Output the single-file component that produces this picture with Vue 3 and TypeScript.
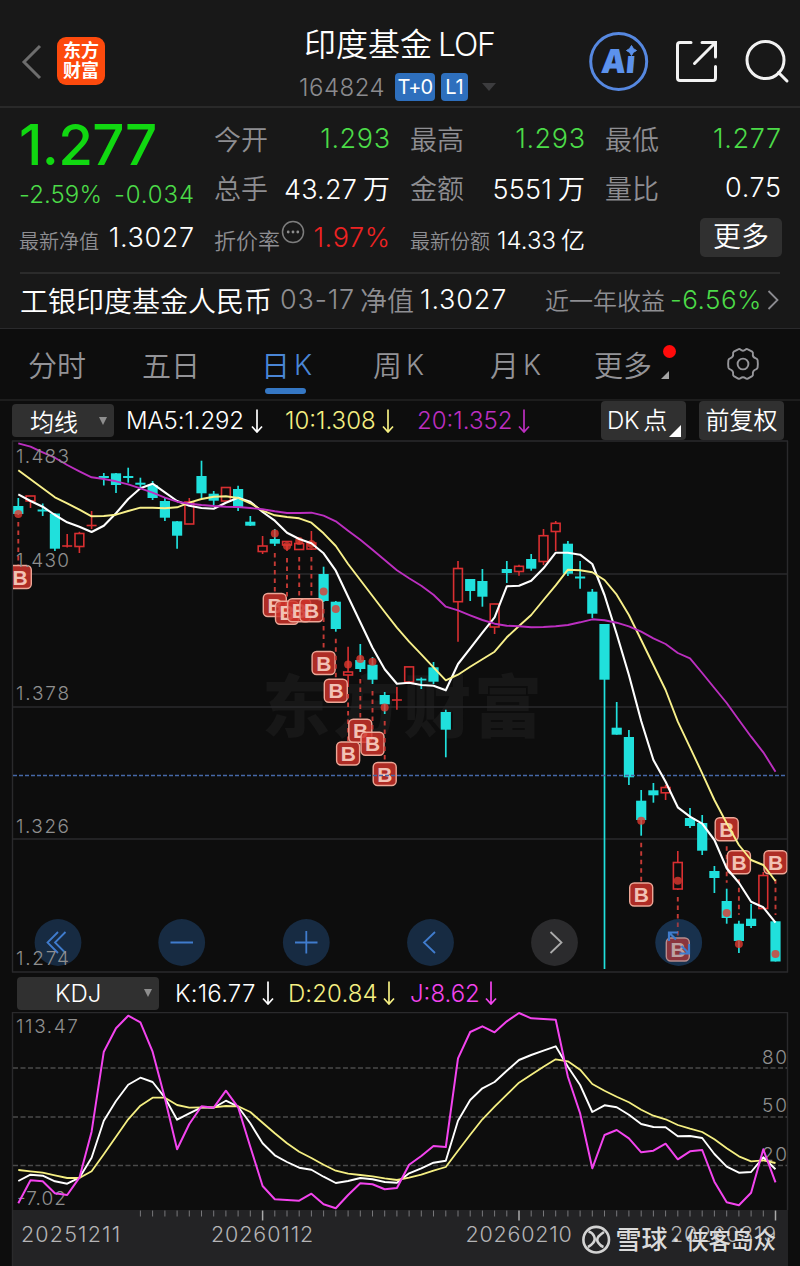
<script setup lang="ts">
type Candle = [up: 0 | 1, high: number, top: number, bottom: number, low: number]
interface Signal { i: number; dot: number; badge: number; dx?: number }
interface Line { points: string; color: string; width: number }

const STEP = 12.213
const xAt = (i: number): number => +(18.3 + STEP * i).toFixed(1)

const candles: Candle[] = [
  [0, 498, 506, 514, 515], [1, 496, 496, 501, 508], [0, 503.5, 509.5, 511.5, 516], [0, 513, 513.5, 548.7, 551],
  [1, 534, 546, 546, 547.5], [1, 531.7, 533.5, 546.5, 553], [1, 511, 525.5, 525.5, 529], [0, 473, 476, 478, 485.5],
  [0, 473, 473.3, 485, 493], [0, 467.7, 476, 478, 482.7], [0, 477.7, 482.7, 484.7, 487.7], [0, 481, 485, 498, 500],
  [0, 498, 501, 517.7, 521], [0, 521, 521.3, 535.7, 548.7], [1, 498, 502, 524, 524], [0, 460.7, 476, 493.3, 498],
  [0, 491, 493.7, 500.7, 505], [1, 487.3, 487.5, 501, 501], [0, 485.7, 489, 507.7, 511], [0, 516, 521.7, 525.7, 526],
  [1, 536, 546, 551.5, 554], [0, 529, 539, 543.7, 546], [1, 541, 541.5, 545, 551], [1, 538, 543.5, 549.5, 550],
  [1, 531, 543, 549, 550], [0, 566.7, 574, 601, 602], [0, 601, 601.7, 629, 631.7], [1, 646.7, 672, 675, 687],
  [0, 644, 660, 669, 672], [0, 657, 664.7, 679.7, 684], [0, 692, 695, 704.3, 714], [1, 687, 700, 700, 709.7],
  [1, 666.7, 666.9, 682, 682], [0, 677.5, 678.7, 680.5, 689], [0, 662, 667.3, 681.7, 684], [0, 709.7, 712, 729.7, 757.3],
  [1, 561, 568.5, 601.7, 641.7], [0, 579, 579, 591, 601], [0, 569, 581, 596.7, 606.7], [1, 603.7, 604, 627, 634],
  [0, 561, 569, 573, 583], [1, 564.7, 566.3, 571.5, 575.7], [0, 554, 559, 568.7, 570.7], [1, 529, 535.7, 561.5, 565],
  [1, 521, 523.3, 531.5, 551], [0, 541, 543.7, 573.7, 576], [0, 561, 576.5, 578.5, 588.7], [0, 589, 591.7, 613.7, 618],
  [0, 624, 624, 679.7, 969], [0, 702, 727.7, 734.7, 734.7], [0, 730, 737, 777.3, 785], [0, 790, 800.7, 820, 835.7],
  [0, 783, 790.3, 795.3, 802.7], [1, 785, 787.5, 792.8, 800], [1, 851, 862.5, 889, 890], [0, 808, 818, 826, 828],
  [0, 815, 823, 850.7, 855], [0, 866, 871, 878, 893], [0, 888.7, 901, 918, 923.7], [0, 920.7, 923.7, 941, 953],
  [0, 904, 918.7, 926, 928], [1, 872, 875.5, 908.5, 909], [0, 921, 921.3, 961.5, 961.5],
]

const signals: Signal[] = [
  { i: 0, dot: 514, badge: 577, dx: 1.5 }, { i: 21, dot: 533.5, badge: 605 }, { i: 22, dot: 546, badge: 612.7 },
  { i: 23, dot: 541, badge: 610.3 }, { i: 24, dot: 544, badge: 610.3 }, { i: 25, dot: 591.5, badge: 663 },
  { i: 26, dot: 609, badge: 690.8 }, { i: 27, dot: 664.5, badge: 753.5 }, { i: 28, dot: 659, badge: 730.8 },
  { i: 29, dot: 661.7, badge: 743.7 }, { i: 30, dot: 707.5, badge: 774 }, { i: 51, dot: 820.7, badge: 894.5 },
  { i: 54, dot: 880.7, badge: 949.5 }, { i: 58, dot: 913, badge: 829.3 }, { i: 59, dot: 944, badge: 862.3 },
  { i: 62, dot: 954, badge: 862.3 },
]

const stem = (s: Signal): [number, number] => {
  const c = candles[s.i]
  return s.badge > s.dot ? [c[4] + 7, s.badge - 12] : [s.badge + 17, c[1] - 6]
}

const ma5 = [494.3, 501, 506.7, 515, 522.3, 526.7, 532, 525.7, 513.3, 499, 488.3, 483.7, 492.3, 501, 505.7, 508, 508.7, 502.7, 497.7, 501.7, 512, 520.7, 532.7, 539, 543.3, 553.3, 570.7, 596.7, 622.3, 647.7, 669.3, 683.7, 682.7, 685, 685.7, 690.3, 664, 648.3, 632.7, 617.3, 586.3, 585.7, 580.7, 568.3, 552.7, 552.7, 554.7, 564, 595, 634, 675, 721, 760, 781.7, 807.3, 816.7, 823.7, 840, 868.3, 882.7, 901.7, 907.3, 922.7]
const ma10 = [470.3, 479.3, 488.3, 497.3, 503.3, 509.7, 516.3, 516, 514.7, 511, 507.7, 507.7, 508.3, 507.3, 502.7, 499, 496.7, 496.3, 498, 503.3, 510.7, 515.3, 517, 518.3, 522.7, 533.3, 546, 564, 580, 596, 612, 627.7, 641.7, 654.3, 667.3, 680.3, 674.7, 666.7, 659.3, 651.7, 637.3, 626, 615, 600, 585.3, 569.7, 570.3, 572.3, 580, 594.7, 615, 640, 665, 690, 721.7, 747.3, 773.3, 800, 823.3, 845, 860, 865, 881]
const ma20 = [443.3, 446.7, 452.3, 457.7, 465, 471.3, 477.3, 479, 481.3, 484.3, 488.3, 492.7, 497.7, 501.7, 503.7, 505, 506, 506.7, 507, 508, 509.3, 511.3, 513, 513, 512.7, 515.7, 521.3, 530.7, 539.7, 549.7, 560, 570.3, 578.3, 585.7, 594.7, 606.7, 610.3, 615.3, 620, 623.7, 625.7, 626.3, 627.3, 627, 626.3, 625, 622.3, 619.3, 620.3, 622.7, 626.3, 631.7, 638.3, 644, 653, 658.3, 673, 688, 703, 720, 736.7, 752.3, 771.7]

/* Oscillator samples, in thirds of a pixel below y = 1000. */
const k = [543, 524, 527, 544, 551, 533, 473, 362, 303, 254, 233, 246, 293, 359, 340, 322, 323, 302, 320, 370, 430, 466, 486, 503, 509, 530, 549, 543, 534, 538, 546, 548, 520, 505, 488, 482, 362, 300, 265, 246, 212, 180, 165, 152, 139, 200, 255, 336, 316, 322, 344, 372, 381, 382, 409, 408, 414, 462, 500, 518, 516, 472, 508]
const d = [510, 514, 518, 526, 534, 534, 514, 463, 410, 358, 317, 293, 293, 315, 323, 322, 322, 318, 319, 336, 368, 400, 430, 455, 474, 494, 512, 521, 525, 529, 535, 540, 533, 524, 512, 501, 452, 404, 358, 320, 284, 248, 224, 200, 178, 184, 209, 252, 272, 290, 307, 329, 347, 358, 375, 386, 396, 418, 445, 469, 484, 481, 489]
const j = [610, 541, 544, 580, 585, 533, 395, 155, 85, 47, 67, 155, 295, 448, 372, 319, 323, 272, 322, 440, 558, 598, 600, 602, 581, 613, 625, 585, 550, 553, 568, 564, 494, 468, 438, 441, 175, 96, 79, 97, 64, 39, 55, 57, 59, 230, 340, 505, 405, 390, 415, 457, 452, 431, 478, 454, 450, 545, 607, 616, 578, 448, 547]

const path = (ys: number[]): string => ys.map((y, i) => `${xAt(i)},${y.toFixed(1)}`).join(' ')
const fromThirds = (v: number[]): number[] => v.map((n) => 1000 + n / 3)

const averages: Line[] = [
  { points: path(ma5), color: '#ffffff', width: 2.1 },
  { points: path(ma10), color: '#f8f08a', width: 1.9 },
  { points: path(ma20), color: '#bc2fc0', width: 1.9 },
]
const oscillators: Line[] = [
  { points: path(fromThirds(k)), color: '#ffffff', width: 1.9 },
  { points: path(fromThirds(d)), color: '#f5ef82', width: 1.8 },
  { points: path(fromThirds(j)), color: '#f344ee', width: 2 },
]
const priceLabels = [
  { text: '1.483', y: 463 }, { text: '1.430', y: 567 }, { text: '1.378', y: 700 }, { text: '1.326', y: 832.5 }, { text: '1.274', y: 965 },
]
const ticks = Array.from({ length: 53 }, (_, n) => n + 10)
const major = new Set([20, 41, 62])
</script>

<template>
  <main class="app">
    <header class="top">
      <svg class="back" width="22" height="38" viewBox="0 0 22 38"><path d="M19 3 3 19l16 16" /></svg>
      <div class="logo"><span>东方</span><span>财富</span></div>
      <div class="title">
        <h1><span>印度基金</span><span class="lof">LOF</span></h1>
        <div class="sub">
          <span class="code">164824</span><b class="tag t0">T+0</b><b class="tag l1">L1</b><i class="caret"></i>
        </div>
      </div>
      <svg class="actions" width="216" height="64" viewBox="584 30 216 64">
        <circle cx="618.700" cy="61.500" r="28" class="ai-ring" />
        <g transform="translate(600.500 73) skewX(-5)"><text x="0" y="0" class="ai-text" textLength="34" lengthAdjust="spacingAndGlyphs">Ai</text></g>
        <path d="M624 44.500H638V56H624z" fill="#181818" />
        <path d="M631.500 45.500Q632.800 49.200 636.500 50.500 632.800 51.800 631.500 55.500 630.200 51.800 626.500 50.500 630.200 49.200 631.500 45.500z" fill="#5c92ec" stroke="#5c92ec" stroke-width="1" />
        <g class="line">
          <path d="M691 42.500H680q-2.500 0-2.500 2.500V78q0 2.500 2.500 2.500H713q2.500 0 2.500-2.500V66.500M702 42.500h13.500V57M715 43 694.500 63.500" />
          <circle cx="765.500" cy="60" r="18.500" /><path d="M778.500 72.500 787 81" />
        </g>
      </svg>
    </header>

    <section class="quote">
      <div class="price">1.277</div>
      <div class="pair"><span>今开</span><em class="g">1.293</em></div>
      <div class="pair"><span>最高</span><em class="g">1.293</em></div>
      <div class="pair"><span>最低</span><em class="g">1.277</em></div>
      <div class="pair change"><em class="g">-2.59%</em><em class="g delta">-0.034</em></div>
      <div class="pair"><span>总手</span><em class="wide">43.27<i>万</i></em></div>
      <div class="pair"><span>金额</span><em class="wide">5551<i>万</i></em></div>
      <div class="pair"><span>量比</span><em>0.75</em></div>
      <div class="pair"><span class="s20">最新净值</span><em class="nav">1.3027</em></div>
      <div class="pair rate"><span class="s22">折价率</span>
        <svg width="24" height="24" viewBox="0 0 24 24"><circle cx="12" cy="12" r="10.500" fill="none" stroke="#7d7d7d" stroke-width="1.500" /><g fill="#8d8d8d"><circle cx="7.200" cy="12" r="1.400" /><circle cx="12" cy="12" r="1.400" /><circle cx="16.800" cy="12" r="1.400" /></g></svg>
        <em class="r">1.97%</em></div>
      <div class="pair"><span class="s20">最新份额</span><em class="share">14.33<i>亿</i></em></div>
      <button class="more">更多</button>
    </section>

    <section class="fund">
      <span class="name">工银印度基金人民币</span><span class="date">03-17</span><span class="label">净值</span><span class="val">1.3027</span>
      <span class="year">近一年收益</span><span class="ret">-6.56%</span>
      <svg width="12" height="20" viewBox="0 0 12 20"><path d="M1.500 1 10.500 10 1.500 19" fill="none" stroke="#8b8b90" stroke-width="1.800" /></svg>
    </section>

    <nav class="tabs">
      <a>分时</a><a>五日</a><a class="on">日<b>K</b></a><a>周<b>K</b></a><a>月<b>K</b></a>
      <a class="rest">更多<i class="dot"></i><i class="corner"></i></a>
      <svg width="34" height="34" viewBox="0 0 34 34" fill="none" stroke="#96969a" stroke-width="1.900" stroke-linejoin="round">
        <path d="M12.200 2.300q1.200-.8 2.200.2 2.600 2.300 5.200 0 1-1 2.200-.2l4.400 2.400q1 .8.700 2-.6 3.600 3 4.700 1.500.5 1.700 1.800.5 3.800 0 7.300-.2 1.300-1.700 1.900-3.500 1.200-3 4.700.2 1.300-.7 2l-4.400 2.500q-1.200.6-2.200-.300-2.600-2.200-5.200 0-1 .9-2.200.3l-4.400-2.500q-1-.8-.700-2 .5-3.500-3-4.700-1.400-.5-1.700-1.900-.5-3.500 0-7.300.2-1.300 1.700-1.800 3.600-1.200 3-4.700-.3-1.200.7-2z" />
        <circle cx="17" cy="17" r="5.400" />
      </svg>
    </nav>

    <div class="bar ma">
      <button class="drop"><span>均线</span><i></i></button>
      <span class="c1">MA5:1.292</span><svg class="arr" viewBox="0 0 12 24"><path d="M6 .5V22.500M1 17.500l5 5.500 5-5.500" /></svg>
      <span class="c2 y">10:1.308</span><svg class="arr y" viewBox="0 0 12 24"><path d="M6 .5V22.500M1 17.500l5 5.500 5-5.500" /></svg>
      <span class="c3 p">20:1.352</span><svg class="arr p" viewBox="0 0 12 24"><path d="M6 .5V22.500M1 17.500l5 5.500 5-5.500" /></svg>
      <button class="chip dk">DK<span>点</span><i></i></button>
      <button class="chip">前复权</button>
    </div>

    <svg class="chart" width="800" height="533" viewBox="0 440 800 533">
      <defs><clipPath id="frame"><rect x="13" y="441" width="774.500" height="531" /></clipPath></defs>
      <text x="262" y="732" class="mark" textLength="280">东方财富</text>
      <path class="grid" d="M12.500 441V972.500M787.500 441V972.500M12 441H788M12 574H788M12 707H788M12 839H788M12 972H788" />
      <g v-for="(c, i) in candles" :key="i" :class="c[0] ? 'up' : 'down'">
        <template v-if="c[0]">
          <path :d="`M${xAt(i)} ${c[1]}V${c[2]}M${xAt(i)} ${c[3]}V${c[4]}`" />
          <rect v-if="c[3] > c[2]" :x="xAt(i) - 4.400" :y="c[2]" width="8.800" :height="c[3] - c[2]" />
          <path v-else :d="`M${xAt(i) - 5} ${c[2]}h10`" />
        </template>
        <template v-else>
          <path :d="`M${xAt(i)} ${c[1]}V${c[4]}`" />
          <rect :x="xAt(i) - 5.100" :y="c[2]" width="10.200" :height="c[3] - c[2]" />
        </template>
      </g>
      <circle cx="678.700" cy="942.500" r="23.400" fill="#172b42" />
      <g clip-path="url(#frame)">
        <g v-for="s in signals" :key="s.i" class="signal">
          <path :d="`M${xAt(s.i)} ${stem(s)[0]}V${stem(s)[1]}`" />
          <circle :cx="xAt(s.i)" :cy="s.dot" r="4" />
          <rect :x="xAt(s.i) - 11.500 + (s.dx ?? 0)" :y="s.badge - 11.500" width="23" height="23" rx="4.500" />
          <text :x="xAt(s.i) + (s.dx ?? 0) + 0.200" :y="s.badge + 7.500">B</text>
        </g>
      </g>
      <path d="M13 775.500H787" class="ref" />
      <polyline v-for="l in averages" :key="l.color" :points="l.points" :stroke="l.color" :stroke-width="l.width" class="series" />
      <g class="pads">
        <circle cx="58" cy="942.500" r="23.400" /><circle cx="181.700" cy="942.500" r="23.400" /><circle cx="306.300" cy="942.500" r="23.400" />
        <circle cx="430.500" cy="942.500" r="23.400" /><circle cx="554.500" cy="942.500" r="23.400" class="off" /><circle cx="678.700" cy="942.500" r="23.400" class="over" />
        <path d="M58 932 47.500 942.500 58 953M65.500 932 55 942.500 65.500 953M170.500 942.500H193M295 942.500H317.500M306.300 931V953.500M435 932 424 942.500 435 953" />
        <path d="M550.500 932 561.500 942.500 550.500 953" class="off" />
        <path d="M678 932.500H669V941M669 932.500 676 939.500M679.500 953.500H689V944M688.500 953 681.500 946" class="thick" />
      </g>
      <text v-for="p in priceLabels" :key="p.text" x="16" :y="p.y" class="axis" textLength="53">{{ p.text }}</text>
    </svg>

    <div class="bar kdj">
      <button class="drop"><span>KDJ</span><i></i></button>
      <span class="k1">K:16.77</span><svg class="arr" viewBox="0 0 12 24"><path d="M6 .5V22.500M1 17.500l5 5.500 5-5.500" /></svg>
      <span class="k2 y">D:20.84</span><svg class="arr y" viewBox="0 0 12 24"><path d="M6 .5V22.500M1 17.500l5 5.500 5-5.500" /></svg>
      <span class="k3 m">J:8.62</span><svg class="arr m" viewBox="0 0 12 24"><path d="M6 .5V22.500M1 17.500l5 5.500 5-5.500" /></svg>
    </div>

    <svg class="chart" width="800" height="254" viewBox="0 1012 800 254">
      <rect x="12" y="1210" width="776" height="56" fill="#232325" />
      <path class="grid" d="M12.500 1012V1266M787.500 1012V1210M12 1012.500H788" />
      <path class="dash" d="M13 1068H787M13 1117H787M13 1165.500H787" />
      <text x="16" y="1032.500" class="axis" textLength="62">113.47</text>
      <text x="17" y="1205" class="axis" textLength="49">-7.02</text>
      <text x="762" y="1063.500" class="axis" textLength="25">80</text>
      <text x="762" y="1111.500" class="axis" textLength="25">50</text>
      <text x="762" y="1160.500" class="axis" textLength="25">20</text>
      <polyline v-for="l in oscillators" :key="l.color" :points="l.points" :stroke="l.color" :stroke-width="l.width" class="series" />
      <path v-for="t in ticks" :key="t" :d="`M${xAt(t)} 1210.500V${major.has(t) ? 1220.500 : 1216.500}`" :class="major.has(t) ? 'tick big' : 'tick'" />
      <text x="21" y="1242" class="axis date" textLength="100">20251211</text>
      <text x="211" y="1242" class="axis date" textLength="103">20260112</text>
      <text x="465.500" y="1242" class="axis date" textLength="107">20260210</text>
      <text x="670" y="1242" class="axis date" textLength="107">20260319</text>
      <g class="brand">
        <circle cx="596.200" cy="1239.700" r="12.800" />
        <path d="M588.500 1231.500q4 1 5.500 4.500 1.800 4-1 7-2 2.500-5 4M604 1232q-3 2-5.500 4.500-2.500 3.500 0 6.500 2 3 5 4" />
        <text x="615.500" y="1249">雪球<tspan x="672">·</tspan><tspan x="686" textLength="90" lengthAdjust="spacingAndGlyphs" class="user">侠客岛众</tspan></text>
      </g>
    </svg>
  </main>
</template>

<style>
body { background: #0d0d0d; }
</style>

<style scoped>
.app { width: 800px; height: 1266px; overflow: hidden; background: #0d0d0d; color: #fff; font-family: Inter, "Noto Sans CJK SC", sans-serif; font-weight: 350; white-space: nowrap; display: flex; flex-direction: column; }
.app > * { flex: none; box-sizing: border-box; }
button { font: inherit; color: inherit; border: 0; padding: 0; background: #303030; }
i, em { font-style: normal; }
a b { font-weight: inherit; }

.top { height: 108px; background: #181818; border-bottom: 2px solid #292929; display: flex; padding: 0 0 0 21px; align-items: flex-start; }
.back { margin-top: 43px; fill: none; stroke: #6d6d6d; stroke-width: 3; }
.logo { width: 48px; height: 48px; margin: 37px 0 0 14px; border-radius: 9px; background: #fd4a0d; display: flex; flex-direction: column; align-items: center; justify-content: center; font-size: 18px; line-height: 20px; font-weight: 700; }
.title { width: 280px; margin: 24px 0 0 159px; height: 84px; padding-left: 40px; box-sizing: border-box; }
h1 { margin: 0; font-size: 32px; line-height: 42px; font-weight: 350; display: flex; }
.lof { margin-left: 6px; letter-spacing: -1.2px; }
.sub { display: flex; align-items: center; height: 28px; margin: 7px 0 0 -5px; }
.code { font-size: 24px; color: #8b8b8f; width: 96px; letter-spacing: .5px; }
.tag { background: #2e6fbd; border-radius: 4px; height: 28px; line-height: 28px; font-size: 20px; font-weight: 400; text-align: center; }
.t0 { width: 40px; letter-spacing: -.8px; }
.l1 { width: 27px; margin-left: 6px; }
.caret { margin-left: 14px; border: 7px solid transparent; border-top: 8px solid #3c3c3e; border-bottom: 0; }
.actions { margin: 30px 0 0 40px; }
.ai-ring { fill: none; stroke: #5688e0; stroke-width: 3; }
.ai-text { font: 900 33px Inter; fill: #5c92ec; }
.line { fill: none; stroke: #f2f2f2; stroke-width: 3; stroke-linecap: round; }

.quote { height: 164px; background: #181818; padding: 5px 19px 0; display: grid; grid-template-columns: 175px 176px 175px 176px; grid-template-rows: 50px 49px 50px; column-gap: 20px; }
.pair { display: flex; justify-content: space-between; align-items: center; font-size: 27px; color: #8e8e92; }
.pair em { color: #fff; font-weight: 350; letter-spacing: .6px; margin-right: -.6px; }
.pair em i { margin-left: 5px; letter-spacing: 0; }
.pair em.wide i { margin-left: 6px; }
.pair em.wide { letter-spacing: .2px; margin-right: 0; }
.pair em.g, .g { color: #4cdb48; }
.pair em.r { color: #ee2323; }
.price { font-size: 56.500px; font-weight: 500; color: #11d811; line-height: 64px; letter-spacing: -.7px; }
.change { font-size: 24px; padding-top: 14px; }
.change em:first-child { letter-spacing: .1px; }
.pair em.delta { letter-spacing: .9px; margin-right: -1px; }
.s20 { font-size: 20px; padding-top: 6px; }
.s22 { font-size: 22px; padding-top: 3px; }
.rate svg { margin: -10px -4px 0 -11px; }
.pair em.share { font-size: 24px; padding-top: 3px; letter-spacing: 0; margin-right: 0; }
.more { justify-self: end; align-self: center; width: 82px; height: 39px; line-height: 38px; border-radius: 5px; font-size: 28px; margin-right: -1px; }

.fund { height: 57px; background: #181818; border-bottom: 1px solid #2a2a2c; margin: 0; padding: 0 20px 1px; display: flex; align-items: center; font-size: 28px; background-image: linear-gradient(#2b2b2b, #2b2b2b); background-size: 760px 2px; background-position: 20px 0; background-repeat: no-repeat; }
.name { width: 260px; }
.date { width: 80px; font-size: 27px; letter-spacing: .8px; color: #8e8e92; }
.label { width: 60px; font-size: 27px; color: #8e8e92; }
.val { width: 125px; font-size: 27px; letter-spacing: .8px; }
.year { width: 125px; font-size: 24px; color: #8e8e92; }
.ret { width: 97px; font-size: 26px; letter-spacing: .5px; color: #4cdb48; }

.tabs { height: 72px; border-bottom: 2px solid #1d1d1d; display: grid; grid-template-columns: 114px 119px 112px 117px 104px 132px 40px; padding-left: 28px; align-items: center; color: #939397; font-size: 29px; }
.tabs a { position: relative; display: flex; height: 68px; align-items: center; }
.tabs > svg { margin-top: -1px; }
.tabs b { margin-left: 4px; font-size: 28px; padding-top: 1px; }
.on { color: #4a86d6; }
.on::after { content: ""; position: absolute; left: 4px; top: 58px; width: 41px; height: 6px; border-radius: 3px; background: #3577c4; }
.dot { position: absolute; left: 69px; top: 15px; width: 13px; height: 13px; border-radius: 50%; background: #ff0b0b; }
.corner { position: absolute; left: 67px; top: 41px; border-left: 8px solid transparent; border-bottom: 8px solid #a4a4a4; }

.bar { display: flex; align-items: center; font-size: 24px; }
.ma { height: 39px; padding-left: 12px; }
.kdj { height: 39px; padding-left: 17px; padding-top: 1px; }
.drop { width: 102px; height: 33px; border-radius: 4px; display: flex; align-items: center; justify-content: space-between; padding: 0 7px 0 18px; box-sizing: border-box; font-size: 24px; }
.kdj .drop { width: 142px; padding-left: 38px; }
.drop i { border: 4.500px solid transparent; border-top: 8px solid #8e8e8e; border-bottom: 0; }
.arr { width: 12px; height: 24px; flex: none; fill: none; stroke: #fff; stroke-width: 1.700; }
.arr.y { stroke: #f5ef82; } .arr.p { stroke: #bc2fc0; } .arr.m { stroke: #f344ee; }
.y { color: #f5ef82; } .p { color: #bc2fc0; } .m { color: #f344ee; }
.c1 { width: 125px; margin-left: 12px; letter-spacing: -.1px; }
.c2 { width: 97px; margin-left: 22px; }
.c3 { width: 101px; margin-left: 23px; }
.chip { width: 85px; height: 39px; border-radius: 4px; font-size: 24px; margin-left: 13px; position: relative; line-height: 36px; }
.dk { margin-left: 71px; width: 85px; text-align: left; padding-left: 6px; letter-spacing: -.3px; }
.dk span { margin-left: 4px; }
.dk i { position: absolute; right: 5px; bottom: 3px; border-left: 12px solid transparent; border-bottom: 12px solid #fff; }
.k1 { width: 87px; margin-left: 16px; letter-spacing: .2px; }
.k2 { width: 95px; margin-left: 14px; letter-spacing: .1px; }
.k3 { width: 75px; margin-left: 15px; }

.chart { display: block; }
.mark { font: 900 68px "Noto Sans CJK SC"; fill: #171717; }
.grid { fill: none; stroke: #2a2a2c; stroke-width: 1.400; }
.dash { stroke: #4a4a4a; stroke-width: 1.400; stroke-dasharray: 5 2.500; }
.ref { stroke: #4668a8; stroke-width: 1.500; stroke-dasharray: 4 2; }
.up path, .up rect { fill: none; stroke: #d92f31; stroke-width: 1.600; }
.down path { stroke: #20e0dc; stroke-width: 1.700; }
.down rect { fill: #20e0dc; }
.signal path { stroke: #c53a35; stroke-width: 1.900; stroke-dasharray: 4.500 4; }
.signal circle { fill: #e0392f; fill-opacity: .8; }
.signal rect { fill: #cf322a; fill-opacity: .83; stroke: #eda797; stroke-width: 1.400; }
.signal text { font: 700 21px "Liberation Sans"; fill: #f2c1b4; text-anchor: middle; }
.series { fill: none; stroke-linejoin: round; }
.pads circle { fill: #172b42; }
.pads circle.off { fill: #2b2b2d; }
.pads circle.over { fill: #1d4570; fill-opacity: .25; }
.pads path { fill: none; stroke: #407ccd; stroke-width: 1.800; }
.pads path.off { stroke: #ababab; }
.pads path.thick { stroke-width: 2.200; }
.axis { font-size: 19px; fill: #8f8f8f; }
.axis.date { font-size: 21.500px; fill: #b4b4b6; }
.tick { stroke: #77777a; stroke-width: 1; }
.tick.big { stroke: #aaa; stroke-width: 1.500; }
.brand circle, .brand path { fill: none; stroke: #d3d3d3; stroke-width: 2.600; }
.brand text { font-size: 26px; font-weight: 500; fill: #dadada; }
.brand .user { font-size: 24px; }
</style>
